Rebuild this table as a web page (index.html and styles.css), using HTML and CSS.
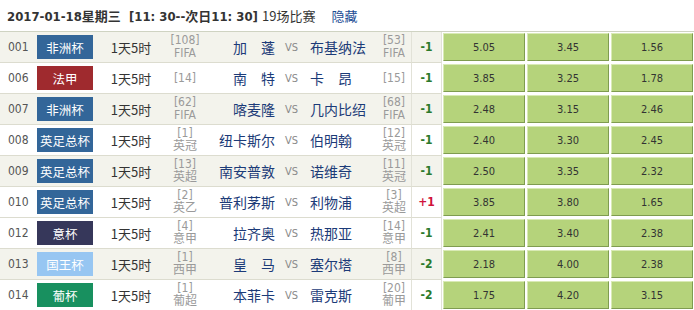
FILE: index.html
```html
<!DOCTYPE html>
<html lang="zh">
<head>
<meta charset="utf-8">
<title>赛事列表</title>
<link rel="stylesheet" href="styles.css">
</head>
<body>
<div class="head">
  <span class="date">2017-01-18星期三&nbsp; [11: 30--次日11: 30]</span>
  <span class="count">19场比赛</span>
  <a class="hide">隐藏</a>
</div>
<table class="list">
  <colgroup>
    <col class="w-num"><col class="w-lg"><col class="w-time"><col class="w-rk"><col class="w-home"><col class="w-vs"><col class="w-away"><col class="w-rk2"><col class="w-hc"><col class="w-odd"><col class="w-odd"><col class="w-odd">
  </colgroup>
  <tr class="alt">
    <td class="num">001</td><td><span class="lg c-blue">非洲杯</span></td><td class="time">1天5时</td>
    <td class="rk">[108]<br>FIFA</td><td class="home">加　蓬</td><td class="vs">VS</td><td class="away">布基纳法</td><td class="rk">[53]<br>FIFA</td>
    <td class="hc">-1</td><td class="odd"><div>5.05</div></td><td class="odd"><div>3.45</div></td><td class="odd"><div>1.56</div></td>
  </tr>
  <tr>
    <td class="num">006</td><td><span class="lg c-red">法甲</span></td><td class="time">1天5时</td>
    <td class="rk">[14]</td><td class="home">南　特</td><td class="vs">VS</td><td class="away">卡　昂</td><td class="rk">[15]</td>
    <td class="hc">-1</td><td class="odd"><div>3.85</div></td><td class="odd"><div>3.25</div></td><td class="odd"><div>1.78</div></td>
  </tr>
  <tr class="alt">
    <td class="num">007</td><td><span class="lg c-blue">非洲杯</span></td><td class="time">1天5时</td>
    <td class="rk">[62]<br>FIFA</td><td class="home">喀麦隆</td><td class="vs">VS</td><td class="away">几内比绍</td><td class="rk">[68]<br>FIFA</td>
    <td class="hc">-1</td><td class="odd"><div>2.48</div></td><td class="odd"><div>3.15</div></td><td class="odd"><div>2.46</div></td>
  </tr>
  <tr>
    <td class="num">008</td><td><span class="lg c-blue">英足总杯</span></td><td class="time">1天5时</td>
    <td class="rk">[1]<br>英冠</td><td class="home">纽卡斯尔</td><td class="vs">VS</td><td class="away">伯明翰</td><td class="rk">[12]<br>英冠</td>
    <td class="hc">-1</td><td class="odd"><div>2.40</div></td><td class="odd"><div>3.30</div></td><td class="odd"><div>2.45</div></td>
  </tr>
  <tr class="alt">
    <td class="num">009</td><td><span class="lg c-blue">英足总杯</span></td><td class="time">1天5时</td>
    <td class="rk">[13]<br>英超</td><td class="home">南安普敦</td><td class="vs">VS</td><td class="away">诺维奇</td><td class="rk">[11]<br>英冠</td>
    <td class="hc">-1</td><td class="odd"><div>2.50</div></td><td class="odd"><div>3.35</div></td><td class="odd"><div>2.32</div></td>
  </tr>
  <tr>
    <td class="num">010</td><td><span class="lg c-blue">英足总杯</span></td><td class="time">1天5时</td>
    <td class="rk">[2]<br>英乙</td><td class="home">普利茅斯</td><td class="vs">VS</td><td class="away">利物浦</td><td class="rk">[3]<br>英超</td>
    <td class="hc plus">+1</td><td class="odd"><div>3.85</div></td><td class="odd"><div>3.80</div></td><td class="odd"><div>1.65</div></td>
  </tr>
  <tr>
    <td class="num">012</td><td><span class="lg c-navy">意杯</span></td><td class="time">1天5时</td>
    <td class="rk">[4]<br>意甲</td><td class="home">拉齐奥</td><td class="vs">VS</td><td class="away">热那亚</td><td class="rk">[14]<br>意甲</td>
    <td class="hc">-1</td><td class="odd"><div>2.41</div></td><td class="odd"><div>3.40</div></td><td class="odd"><div>2.38</div></td>
  </tr>
  <tr class="alt">
    <td class="num">013</td><td><span class="lg c-sky">国王杯</span></td><td class="time">1天5时</td>
    <td class="rk">[1]<br>西甲</td><td class="home">皇　马</td><td class="vs">VS</td><td class="away">塞尔塔</td><td class="rk">[8]<br>西甲</td>
    <td class="hc">-2</td><td class="odd"><div>2.18</div></td><td class="odd"><div>4.00</div></td><td class="odd"><div>2.38</div></td>
  </tr>
  <tr>
    <td class="num">014</td><td><span class="lg c-green">葡杯</span></td><td class="time">1天5时</td>
    <td class="rk">[1]<br>葡超</td><td class="home">本菲卡</td><td class="vs">VS</td><td class="away">雷克斯</td><td class="rk">[20]<br>葡甲</td>
    <td class="hc">-2</td><td class="odd"><div>1.75</div></td><td class="odd"><div>4.20</div></td><td class="odd"><div>3.15</div></td>
  </tr>
</table>
</body>
</html>
```
FILE: styles.css
```css
html, body {
  margin: 0;
  padding: 0;
  background: #fff;
}
body {
  width: 694px;
  overflow: hidden;
  font-family: "DejaVu Sans Condensed", "Noto Sans CJK SC", sans-serif;
  color: #333;
}
.head {
  height: 31px;
  border-bottom: 1px solid #cfd3c2;
  display: flex;
  align-items: center;
  padding-left: 7px;
  font-size: 13px;
  white-space: nowrap;
}
.date {
  font-weight: bold;
  color: #333;
}
.count {
  margin-left: 4px;
  font-family: "Noto Sans CJK SC", sans-serif;
  font-size: 13px;
}
.hide {
  margin-left: 16px;
  color: #1b4c94;
  font-family: "Noto Sans CJK SC", sans-serif;
  font-size: 13px;
}
.list {
  width: 694px;
  table-layout: fixed;
  border-collapse: separate;
  border-spacing: 0;
}
.w-num { width: 37px; }
.w-lg { width: 58px; }
.w-time { width: 72px; }
.w-rk { width: 36px; }
.w-home { width: 72px; }
.w-vs { width: 33px; }
.w-away { width: 69px; }
.w-rk2 { width: 34px; }
.w-hc { width: 31px; }
.w-odd { width: 84px; }
.list td {
  height: 30px;
  padding: 0;
  border-bottom: 1px solid #dcdccf;
  white-space: nowrap;
  overflow: hidden;
  vertical-align: middle;
}
.list tr.alt td {
  background: #f3f3ec;
}
.num {
  padding-left: 8px !important;
  font-size: 12px;
  color: #555;
}
.lg {
  display: flex;
  width: 56px;
  height: 24px;
  align-items: center;
  justify-content: center;
  color: #fff;
  font-family: "Noto Sans CJK SC", sans-serif;
  font-size: 12.5px;
}
.c-blue { background: #336699; }
.c-red { background: #9f2a2e; }
.c-navy { background: #36375a; }
.c-sky { background: #97c6f2; }
.c-green { background: #18905f; }
.time {
  text-align: center;
  font-family: "Noto Sans CJK SC", sans-serif;
  font-size: 13px;
  color: #333;
}
.rk {
  text-align: center;
  font-size: 12px;
  line-height: 13px;
  color: #9a9a9a;
  font-family: "DejaVu Sans Condensed", "Noto Sans CJK SC", sans-serif;
}
.home {
  text-align: right;
  font-family: "Noto Sans CJK SC", sans-serif;
  font-size: 14px;
  color: #1c3b78;
}
.away {
  padding-left: 2px !important;
  font-family: "Noto Sans CJK SC", sans-serif;
  font-size: 14px;
  color: #1c3b78;
}
.vs {
  text-align: center;
  font-size: 11px;
  color: #8a8a8a;
  font-family: "DejaVu Sans Condensed", sans-serif;
}
.hc {
  text-align: center;
  font-weight: bold;
  font-size: 12px;
  color: #2b7a2b;
  border-left: 1px solid #e2e2d8;
  border-right: 1px solid #e2e2d8;
}
.hc.plus {
  color: #d0123c;
}
.list tr td.odd {
  background: #fff;
  border-bottom-color: #fff;
  padding: 0 1px;
}
.odd div {
  height: 26px;
  display: flex;
  align-items: center;
  justify-content: center;
  background: #b5d37b;
  border-top: 1px solid #d9eab5;
  border-left: 1px solid #d9eab5;
  border-right: 1px solid #7f9c50;
  border-bottom: 1px solid #7f9c50;
  font-size: 11px;
  color: #333;
}
```
